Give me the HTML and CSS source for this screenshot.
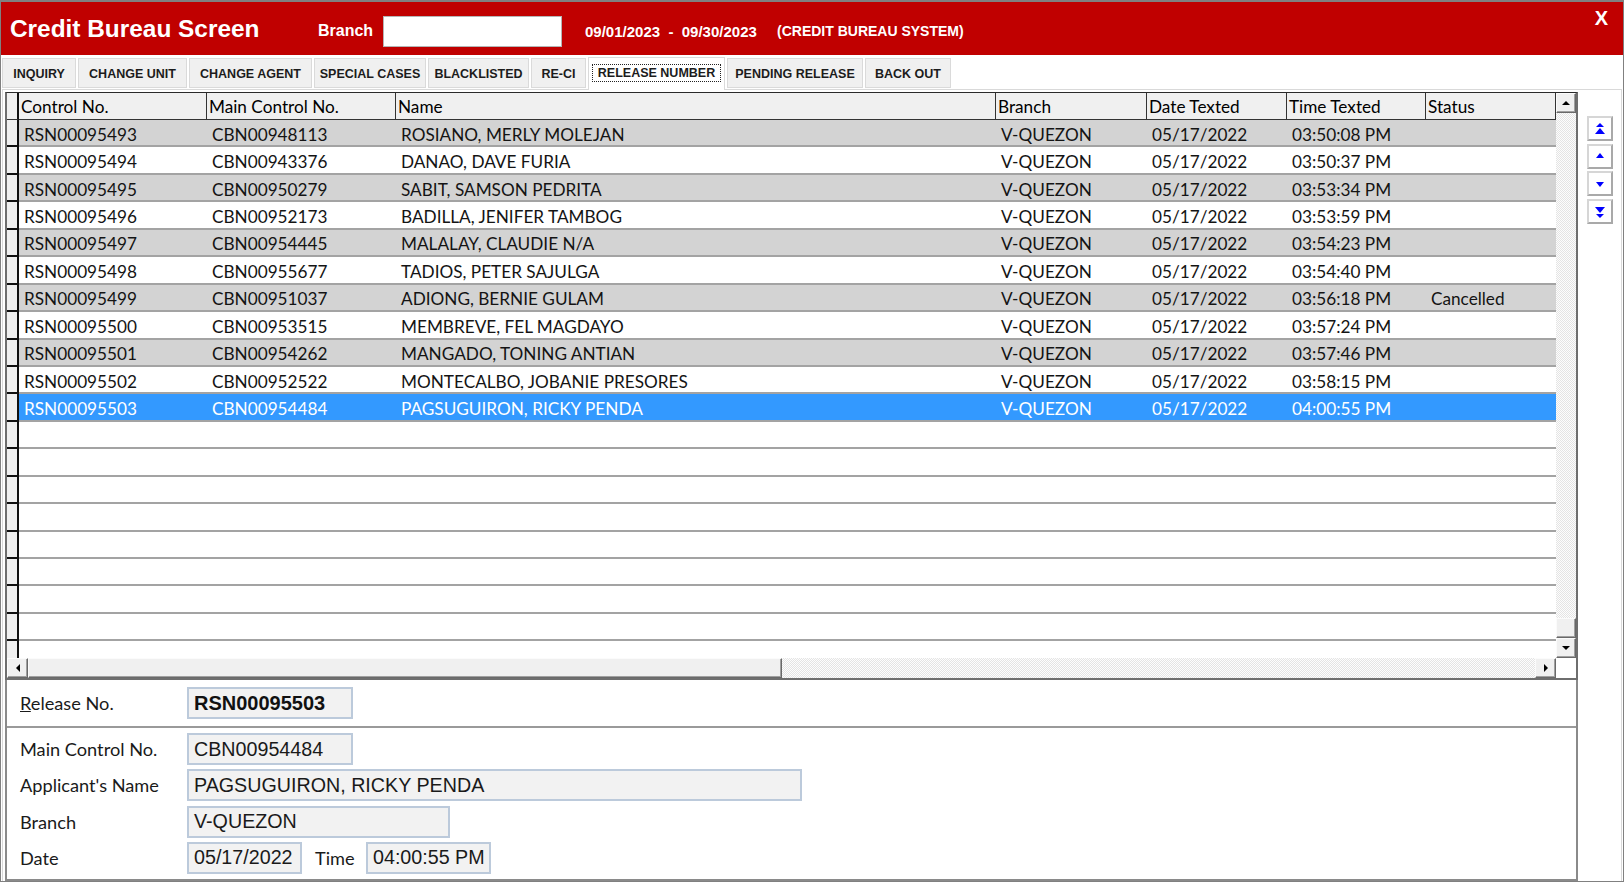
FILE: index.html
```html
<!DOCTYPE html>
<html lang="en">
<head>
<meta charset="utf-8">
<title>Credit Bureau Screen</title>
<link rel="stylesheet" href="styles.css">
</head>
<body>
<div class="window">
  <header class="titlebar">
    <h1 class="title">Credit Bureau Screen</h1>
    <span class="branch-label">Branch</span>
    <div class="branch-input"></div>
    <span class="period">09/01/2023  -  09/30/2023</span>
    <span class="system">(CREDIT BUREAU SYSTEM)</span>
    <span class="close">X</span>
  </header>

  <nav class="tabs">
    <div class="tab t-inquiry">INQUIRY</div>
    <div class="tab t-unit">CHANGE UNIT</div>
    <div class="tab t-agent">CHANGE AGENT</div>
    <div class="tab t-special">SPECIAL CASES</div>
    <div class="tab t-black">BLACKLISTED</div>
    <div class="tab t-reci">RE-CI</div>
    <div class="tab t-release active"><span class="focus">RELEASE NUMBER</span></div>
    <div class="tab t-pending">PENDING RELEASE</div>
    <div class="tab t-backout">BACK OUT</div>
  </nav>

  <div class="tabpanel">
    <div class="main">
      <div class="grid">
        <div class="grid-top">
          <div class="rows">
            <div class="row head"><div class="sel"></div><div>Control No.</div><div>Main Control No.</div><div>Name</div><div>Branch</div><div>Date Texted</div><div>Time Texted</div><div>Status</div></div>
            <div class="row alt"><div class="sel"></div><div>RSN00095493</div><div>CBN00948113</div><div>ROSIANO, MERLY MOLEJAN</div><div>V-QUEZON</div><div>05/17/2022</div><div>03:50:08 PM</div><div></div></div>
            <div class="row"><div class="sel"></div><div>RSN00095494</div><div>CBN00943376</div><div>DANAO, DAVE FURIA</div><div>V-QUEZON</div><div>05/17/2022</div><div>03:50:37 PM</div><div></div></div>
            <div class="row alt"><div class="sel"></div><div>RSN00095495</div><div>CBN00950279</div><div>SABIT, SAMSON PEDRITA</div><div>V-QUEZON</div><div>05/17/2022</div><div>03:53:34 PM</div><div></div></div>
            <div class="row"><div class="sel"></div><div>RSN00095496</div><div>CBN00952173</div><div>BADILLA, JENIFER TAMBOG</div><div>V-QUEZON</div><div>05/17/2022</div><div>03:53:59 PM</div><div></div></div>
            <div class="row alt"><div class="sel"></div><div>RSN00095497</div><div>CBN00954445</div><div>MALALAY, CLAUDIE N/A</div><div>V-QUEZON</div><div>05/17/2022</div><div>03:54:23 PM</div><div></div></div>
            <div class="row"><div class="sel"></div><div>RSN00095498</div><div>CBN00955677</div><div>TADIOS, PETER SAJULGA</div><div>V-QUEZON</div><div>05/17/2022</div><div>03:54:40 PM</div><div></div></div>
            <div class="row alt"><div class="sel"></div><div>RSN00095499</div><div>CBN00951037</div><div>ADIONG, BERNIE GULAM</div><div>V-QUEZON</div><div>05/17/2022</div><div>03:56:18 PM</div><div>Cancelled</div></div>
            <div class="row"><div class="sel"></div><div>RSN00095500</div><div>CBN00953515</div><div>MEMBREVE, FEL MAGDAYO</div><div>V-QUEZON</div><div>05/17/2022</div><div>03:57:24 PM</div><div></div></div>
            <div class="row alt"><div class="sel"></div><div>RSN00095501</div><div>CBN00954262</div><div>MANGADO, TONING ANTIAN</div><div>V-QUEZON</div><div>05/17/2022</div><div>03:57:46 PM</div><div></div></div>
            <div class="row"><div class="sel"></div><div>RSN00095502</div><div>CBN00952522</div><div>MONTECALBO, JOBANIE PRESORES</div><div>V-QUEZON</div><div>05/17/2022</div><div>03:58:15 PM</div><div></div></div>
            <div class="row selected"><div class="sel"></div><div>RSN00095503</div><div>CBN00954484</div><div>PAGSUGUIRON, RICKY PENDA</div><div>V-QUEZON</div><div>05/17/2022</div><div>04:00:55 PM</div><div></div></div>
            <div class="row"><div class="sel"></div><div></div><div></div><div></div><div></div><div></div><div></div><div></div></div>
            <div class="row"><div class="sel"></div><div></div><div></div><div></div><div></div><div></div><div></div><div></div></div>
            <div class="row"><div class="sel"></div><div></div><div></div><div></div><div></div><div></div><div></div><div></div></div>
            <div class="row"><div class="sel"></div><div></div><div></div><div></div><div></div><div></div><div></div><div></div></div>
            <div class="row"><div class="sel"></div><div></div><div></div><div></div><div></div><div></div><div></div><div></div></div>
            <div class="row"><div class="sel"></div><div></div><div></div><div></div><div></div><div></div><div></div><div></div></div>
            <div class="row"><div class="sel"></div><div></div><div></div><div></div><div></div><div></div><div></div><div></div></div>
            <div class="row"><div class="sel"></div><div></div><div></div><div></div><div></div><div></div><div></div><div></div></div>
            <div class="row"><div class="sel"></div><div></div><div></div><div></div><div></div><div></div><div></div><div></div></div>
          </div>
          <div class="vscroll">
            <div class="sb-btn"><span class="tri tri-up"></span></div>
            <div class="sb-track"></div>
            <div class="sb-btn"></div>
            <div class="sb-btn"><span class="tri tri-down"></span></div>
          </div>
        </div>
        <div class="grid-bottom">
          <div class="hscroll">
            <div class="sb-btn sb-h"><span class="tri tri-left"></span></div>
            <div class="sb-thumb-h"></div>
            <div class="sb-track"></div>
            <div class="sb-btn sb-h"><span class="tri tri-right"></span></div>
          </div>
          <div class="corner"></div>
        </div>
      </div>

      <div class="details">
        <div class="release-row">
          <span class="label"><span class="ul">R</span>elease No.</span>
          <div class="box box-code box-bold">RSN00095503</div>
        </div>
        <div class="fields">
          <div class="field">
            <span class="label">Main Control No.</span>
            <div class="box box-code">CBN00954484</div>
          </div>
          <div class="field">
            <span class="label">Applicant's Name</span>
            <div class="box box-name">PAGSUGUIRON, RICKY PENDA</div>
          </div>
          <div class="field">
            <span class="label">Branch</span>
            <div class="box box-branch">V-QUEZON</div>
          </div>
          <div class="field">
            <span class="label">Date</span>
            <div class="box box-date">05/17/2022</div>
            <span class="label time-label">Time</span>
            <div class="box box-time">04:00:55 PM</div>
          </div>
        </div>
      </div>
    </div>

    <div class="nav">
      <div class="nav-btn">
        <svg width="12" height="14" viewBox="0 0 12 14"><polygon points="6,1 10,5 2,5" fill="#0000ff"/><polygon points="6,6 11,12 1,12" fill="#0000ff"/></svg>
      </div>
      <div class="nav-btn">
        <svg width="12" height="12" viewBox="0 0 12 12"><polygon points="6,3 10,8 2,8" fill="#0000ff"/></svg>
      </div>
      <div class="nav-btn">
        <svg width="12" height="12" viewBox="0 0 12 12"><polygon points="2,4 10,4 6,9" fill="#0000ff"/></svg>
      </div>
      <div class="nav-btn">
        <svg width="12" height="14" viewBox="0 0 12 14"><polygon points="1,2 11,2 6,8" fill="#0000ff"/><polygon points="2,9 10,9 6,13" fill="#0000ff"/></svg>
      </div>
    </div>
  </div>
</div>
</body>
</html>
```

FILE: styles.css
```css
* { box-sizing: border-box; }
html, body { margin: 0; padding: 0; }
body {
  width: 1624px;
  height: 882px;
  overflow: hidden;
  background: #fff;
  font-family: "Liberation Sans", Arial, sans-serif;
}

.window {
  width: 1624px;
  height: 882px;
  border: 1px solid #808080;
  border-top-width: 2px;
  display: flex;
  flex-direction: column;
  overflow: hidden;
  background: #fff;
}

/* ---------- title bar ---------- */
.titlebar {
  height: 53px;
  flex: none;
  background: #c00000;
  color: #fff;
  display: flex;
  align-items: center;
  padding: 5px 15px 0 9px;
}
.title {
  margin: -5px 0 0 0;
  width: 308px;
  flex: none;
  font-size: 24.4px;
  font-weight: bold;
  white-space: nowrap;
}
.branch-label {
  width: 65px;
  flex: none;
  font-size: 16px;
  font-weight: bold;
}
.branch-input {
  width: 179px;
  height: 31px;
  flex: none;
  background: #fff;
  border: 1px solid #b5b5b5;
}
.period {
  margin-left: 23px;
  width: 192px;
  flex: none;
  font-size: 15px;
  font-weight: bold;
  white-space: pre;
}
.system {
  font-size: 14px;
  font-weight: bold;
  white-space: nowrap;
}
.close {
  margin-left: auto;
  align-self: flex-start;
  font-size: 20px;
  font-weight: bold;
  line-height: 23px;
}

/* ---------- tabs ---------- */
.tabs {
  height: 34px;
  flex: none;
  display: flex;
  align-items: flex-end;
  gap: 2px;
  padding-left: 1px;
  background: #fff;
}
.tab {
  height: 30px;
  margin-bottom: 1px;
  padding: 2px 0 0;
  background: #f0f0f0;
  border: 1px solid #dadada;
  font-size: 12.5px;
  font-weight: bold;
  color: #1c1c1c;
  display: flex;
  align-items: center;
  justify-content: center;
  white-space: nowrap;
  flex: none;
}
.t-inquiry { width: 74px; }
.t-unit { width: 109px; }
.t-agent { width: 123px; }
.t-special { width: 112px; }
.t-black { width: 101px; }
.t-reci { width: 55px; }
.t-release { width: 137px; }
.t-pending { width: 136px; }
.t-backout { width: 86px; }
.tab.active {
  height: 33px;
  margin-bottom: -1px;
  padding: 0 0 3px;
  background: #fff;
  border-bottom: none;
  position: relative;
  z-index: 1;
}
.focus {
  border: 1px dotted #222;
  padding: 1px 5px;
}

/* ---------- tab panel ---------- */
.tabpanel {
  flex: 1;
  min-height: 0;
  margin: 0 1px;
  border-top: 1px solid #d9d9d9;
  border-left: 1px solid #d9d9d9;
  border-right: 1px solid #d9d9d9;
  padding: 2px 0 0 2px;
  display: flex;
}
.main {
  width: 1573px;
  flex: none;
  display: flex;
  flex-direction: column;
}

/* ---------- grid ---------- */
.grid {
  height: 588px;
  flex: none;
  border: 2px solid #6e6e6e;
  border-top: 1px solid #2a2a2a;
  display: flex;
  flex-direction: column;
}
.grid-top {
  height: 565px;
  display: flex;
}
.rows {
  width: 1549px;
  overflow: hidden;
  background: #fff;
}
.row {
  display: grid;
  grid-template-columns: 12px 188px 189px 600px 151px 140px 139px 130px;
  height: 27.45px;
}
.row > div {
  border-bottom: 2px solid #a3a3a3;
  padding: 3px 0 0 5px;
  display: flex;
  align-items: center;
  white-space: nowrap;
  overflow: hidden;
  font-family: Lato, "Open Sans", sans-serif;
  font-size: 17.2px;
  color: #141414;
}
.row > .sel {
  background: #f0f0f0;
  border-right: 2px solid #111;
  border-bottom-color: #111;
  padding: 0;
}
.row.head {
  height: 27px;
  background: #f0f0f0;
}
.row.head > div {
  border-bottom: 1px solid #333;
  border-right: 1px solid #333;
  padding: 0 0 0 2px;
  color: #000;
}
.row.head > .sel { border-right: 2px solid #111; padding: 0; }
.row.alt > div:not(.sel) { background: #d3d3d3; }
.row.selected > div:not(.sel) { background: #3399ff; color: #fff; }

/* scrollbars */
.vscroll {
  width: 20px;
  display: flex;
  flex-direction: column;
}
.sb-btn {
  height: 20px;
  flex: none;
  background: #f0f0f0;
  border: 1px solid;
  border-color: #fbfbfb #696969 #696969 #fbfbfb;
  box-shadow: inset -1px -1px #a0a0a0;
  display: flex;
  align-items: center;
  justify-content: center;
}
.sb-h { width: 21px; height: 20px; }
.sb-track {
  flex: 1;
  background: repeating-conic-gradient(#e4e4e4 0% 25%, #fdfdfd 0% 50%) 0 0 / 2px 2px;
}
.sb-thumb-h {
  width: 754px;
  flex: none;
  background: #f0f0f0;
  border: 1px solid;
  border-color: #fbfbfb #696969 #696969 #fbfbfb;
  box-shadow: inset -1px -1px #a0a0a0;
}
.tri { width: 0; height: 0; display: block; }
.tri-up { border-left: 4px solid transparent; border-right: 4px solid transparent; border-bottom: 4px solid #000; }
.tri-down { border-left: 4px solid transparent; border-right: 4px solid transparent; border-top: 4px solid #000; }
.tri-left { border-top: 4px solid transparent; border-bottom: 4px solid transparent; border-right: 4px solid #000; }
.tri-right { border-top: 4px solid transparent; border-bottom: 4px solid transparent; border-left: 4px solid #000; }

.grid-bottom {
  height: 20px;
  display: flex;
}
.hscroll {
  width: 1549px;
  display: flex;
}
.corner {
  width: 20px;
  background: #fff;
}

/* ---------- details ---------- */
.details {
  flex: 1;
  border: 2px solid #8a8a8a;
  border-top: none;
  display: flex;
  flex-direction: column;
}
.release-row {
  height: 48px;
  flex: none;
  display: flex;
  align-items: center;
  padding-left: 13px;
  border-bottom: 2px solid #9a9a9a;
}
.fields {
  padding: 5px 0 0 13px;
  display: flex;
  flex-direction: column;
  gap: 4.3px;
}
.field {
  height: 32px;
  display: flex;
  align-items: center;
}
.label {
  width: 167px;
  flex: none;
  font-family: Lato, "Open Sans", sans-serif;
  font-size: 18.2px;
  color: #1a1a1a;
  white-space: nowrap;
}
.ul { text-decoration: underline; }
.time-label {
  width: 38px;
  margin: 0 13px;
}
.box {
  height: 32px;
  flex: none;
  background: #f2f2f2;
  border: 2px solid #bccadb;
  padding-left: 5px;
  display: flex;
  align-items: center;
  font-family: "Liberation Sans", Arial, sans-serif;
  font-size: 19.7px;
  color: #1a1a1a;
  white-space: nowrap;
}
.box-bold { font-weight: bold; color: #111; font-size: 20px; }
.box-code { width: 166px; }
.box-name { width: 615px; }
.box-branch { width: 263px; }
.box-date { width: 115px; }
.box-time { width: 125px; }

/* ---------- navigation buttons ---------- */
.nav {
  margin-left: 9px;
  padding-top: 24px;
  display: flex;
  flex-direction: column;
  gap: 2.7px;
}
.nav-btn {
  width: 26px;
  height: 25px;
  background: #fff;
  border: 2px solid;
  border-color: #d6d6d6 #a9a9a9 #a9a9a9 #d6d6d6;
  display: flex;
  align-items: center;
  justify-content: center;
}
.nav-btn svg { display: block; }
```
